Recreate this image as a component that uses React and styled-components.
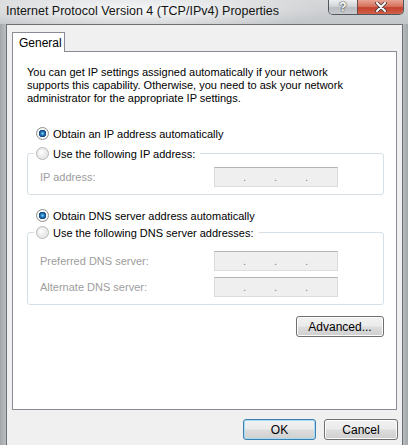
import React from "react";
import styled, { createGlobalStyle } from "styled-components";

const Global = createGlobalStyle`
  html, body { margin: 0; padding: 0; background: #b9bcc0; }
  body { font-family: "Liberation Sans", Arial, sans-serif; font-size: 11px; color: #000; }
`;

const Window = styled.div`
  width: 408px;
  height: 445px;
  overflow: hidden;
  display: flex;
  flex-direction: column;
  background: linear-gradient(90deg, #a4a7aa 0px, #b8bbbe 5px, #c4c6c9 50%, #b8bbbe calc(100% - 5px), #a4a7aa 100%);
`;

const TitleBar = styled.div`
  height: 24px;
  flex: none;
  display: flex;
  justify-content: space-between;
  align-items: flex-start;
  background: radial-gradient(ellipse 190px 22px at 135px 10px, rgba(255, 255, 255, 0.85), rgba(255, 255, 255, 0) 100%),
    linear-gradient(180deg, #d6d8da, #c3c6c9);
`;

const Title = styled.div`
  padding: 3px 0 0 6px;
  font-size: 12.5px;
  line-height: 16px;
  color: #141414;
  white-space: nowrap;
`;

const Controls = styled.div`
  display: flex;
  margin-right: 4px;
  height: 14px;
  border: 1px solid #50575e;
  border-top: none;
  border-radius: 0 0 5px 5px;
  overflow: hidden;
`;

const CapButton = styled.div`
  width: ${(p) => p.$w}px;
  display: flex;
  align-items: center;
  justify-content: center;
  background: ${(p) =>
    p.$close
      ? "linear-gradient(180deg, #e8a393 0%, #d7735f 45%, #c4422c 55%, #d1604a 100%)"
      : "linear-gradient(180deg, #eceef0 0%, #d2d5d8 45%, #b9bdc1 55%, #c8cbce 100%)"};
  border-left: ${(p) => (p.$close ? "1px solid #6a4a44" : "none")};
  color: #fff;
  font-weight: bold;
  font-size: 12px;
  line-height: 14px;
  text-shadow: 0 0 2px #333, 0 0 1px #333;
`;

const Client = styled.div`
  flex: 1;
  margin: 0 5px 0 6px;
  border: 1px solid #6d7074;
  border-bottom: none;
  background: #f0f0f0;
  padding: 7px 5px 0 5px;
`;

const Tab = styled.div`
  position: relative;
  z-index: 1;
  width: 53px;
  height: 20px;
  box-sizing: border-box;
  margin-bottom: -1px;
  padding: 3px 0 0 6px;
  border: 1px solid #898c95;
  border-bottom: none;
  background: #fff;
  font-size: 12px;
  line-height: 15px;
`;

const Panel = styled.div`
  height: 359px;
  box-sizing: border-box;
  border: 1px solid #898c95;
  background: #fff;
  padding: 14px 12px 0 14px;
`;

const Intro = styled.p`
  margin: 0;
  line-height: 13px;
`;

const Row = styled.label`
  display: flex;
  align-items: center;
  gap: 4px;
  height: 15px;
  padding-left: ${(p) => (p.$legend ? 0 : 9)}px;
  margin-top: ${(p) => p.$top || 0}px;
`;

const Radio = styled.span`
  width: 13px;
  height: 13px;
  flex: none;
  box-sizing: border-box;
  border-radius: 50%;
  border: 1px solid ${(p) => (p.$checked ? "#8d8f91" : "#b4b6b8")};
  background: ${(p) =>
    p.$checked
      ? "radial-gradient(circle at 50% 50%, #7fd0f4 0px, #1f74b8 2px, #0d3f78 3.5px, #ffffff 4px, #e6e6e6 100%)"
      : "radial-gradient(circle at 40% 40%, #ffffff 0px, #f2f2f2 30%, #d6d6d6 100%)"};
  box-shadow: inset 0 0 0 1px ${(p) => (p.$checked ? "#f4f4f4" : "#ececec")};
`;

const Group = styled.fieldset`
  margin: ${(p) => p.$top}px 0 0 0;
  padding: ${(p) => p.$pt}px 0 7px 0;
  border: 1px solid #d5dfe5;
  border-radius: 3px;
  min-width: 0;
`;

const Legend = styled.legend`
  margin-left: 6px;
  padding: 0 5px 0 2px;
`;

const FieldRow = styled.div`
  display: grid;
  grid-template-columns: 174px 124px;
  align-items: center;
  padding-left: 12px;
  margin-top: ${(p) => p.$top || 0}px;
`;

const FieldLabel = styled.span`
  color: #9d9d9d;
`;

const IpBox = styled.div`
  height: 20px;
  box-sizing: border-box;
  display: flex;
  background: #efefef;
  border: 1px solid #dadcdf;
  border-top-color: #b1b3b7;
`;

const Seg = styled.span`
  width: 31px;
  text-align: right;
  color: #777;
  font-size: 10px;
  line-height: 20px;
`;

const Button = styled.button`
  font-family: inherit;
  font-size: 12px;
  color: #000;
  width: ${(p) => p.$w}px;
  height: 21px;
  padding: 0;
  border-radius: 3px;
  border: 1px solid ${(p) => (p.$default ? "#3c7fb1" : "#707070")};
  background: linear-gradient(180deg, #f2f2f2 0%, #ebebeb 48%, #dddddd 52%, #cfcfcf 100%);
  box-shadow: inset 0 0 0 1px ${(p) => (p.$default ? "#a6dbf3" : "#fcfcfc")};
`;

const RightAlign = styled.div`
  display: flex;
  justify-content: flex-end;
  margin-top: 11px;
`;

const Footer = styled.div`
  display: flex;
  justify-content: flex-end;
  gap: 8px;
  padding: 9px 0 0 0;
  margin-right: -1px;
`;

function IpField() {
  return (
    <IpBox>
      <Seg>.</Seg>
      <Seg>.</Seg>
      <Seg>.</Seg>
    </IpBox>
  );
}

export default function App() {
  return (
    <>
      <Global />
      <Window>
        <TitleBar>
          <Title>Internet Protocol Version 4 (TCP/IPv4) Properties</Title>
          <Controls>
            <CapButton $w={28}>?</CapButton>
            <CapButton $w={45} $close>
              <svg width="12" height="10" viewBox="0 0 12 10">
                <path d="M2 1 L10 9 M10 1 L2 9" stroke="#3a3a3a" strokeWidth="3.6" strokeLinecap="round" />
                <path d="M2 1 L10 9 M10 1 L2 9" stroke="#fff" strokeWidth="2" strokeLinecap="round" />
              </svg>
            </CapButton>
          </Controls>
        </TitleBar>
        <Client>
          <Tab>General</Tab>
          <Panel>
            <Intro>
              You can get IP settings assigned automatically if your network
              <br />
              supports this capability. Otherwise, you need to ask your network
              <br />
              administrator for the appropriate IP settings.
            </Intro>
            <Row $top={21}>
              <Radio $checked />
              Obtain an IP address automatically
            </Row>
            <Group $top={5} $pt={6}>
              <Legend>
                <Row $legend>
                  <Radio />
                  Use the following IP address:
                </Row>
              </Legend>
              <FieldRow>
                <FieldLabel>IP address:</FieldLabel>
                <IpField />
              </FieldRow>
            </Group>
            <Row $top={13}>
              <Radio $checked />
              Obtain DNS server address automatically
            </Row>
            <Group $top={2} $pt={11}>
              <Legend>
                <Row $legend>
                  <Radio />
                  Use the following DNS server addresses:
                </Row>
              </Legend>
              <FieldRow>
                <FieldLabel>Preferred DNS server:</FieldLabel>
                <IpField />
              </FieldRow>
              <FieldRow $top={6}>
                <FieldLabel>Alternate DNS server:</FieldLabel>
                <IpField />
              </FieldRow>
            </Group>
            <RightAlign>
              <Button $w={88}>Advanced...</Button>
            </RightAlign>
          </Panel>
          <Footer>
            <Button $w={73} $default>
              OK
            </Button>
            <Button $w={74}>Cancel</Button>
          </Footer>
        </Client>
      </Window>
    </>
  );
}
